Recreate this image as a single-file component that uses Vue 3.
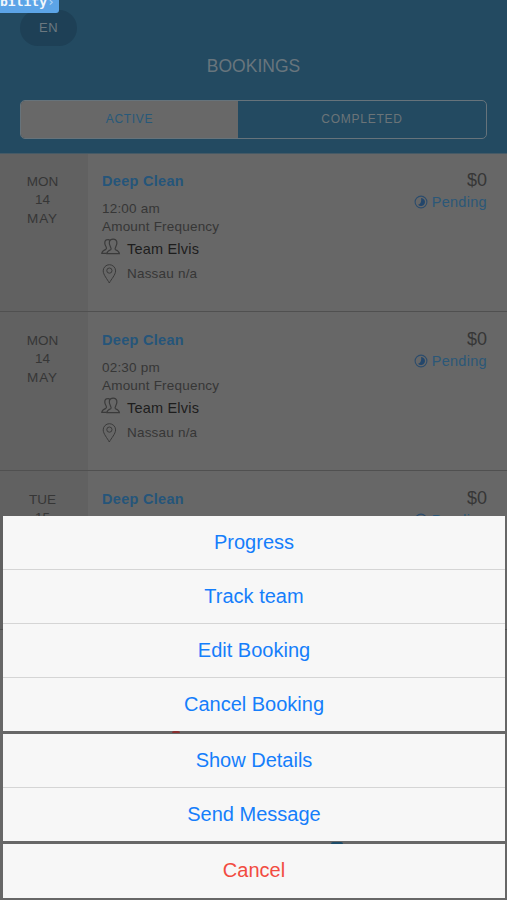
<script setup>
const bookings = [
  { weekday: 'MON', day: '14', month: 'MAY', time: '12:00 am' },
  { weekday: 'MON', day: '14', month: 'MAY', time: '02:30 pm' },
  { weekday: 'TUE', day: '15', month: 'MAY', time: '12:00 am' },
]
const groups = [
  ['Progress', 'Track team', 'Edit Booking', 'Cancel Booking'],
  ['Show Details', 'Send Message'],
]
</script>

<template>
  <div class="screen">
    <header class="header">
      <span class="debug">bility<i>›</i></span>
      <button class="lang">EN</button>
      <h1>BOOKINGS</h1>
      <nav class="tabs">
        <span class="tab active">ACTIVE</span>
        <span class="tab done">COMPLETED</span>
      </nav>
    </header>

    <main>
      <article v-for="(b, i) in bookings" :key="i" class="booking">
        <div class="date">
          <span>{{ b.weekday }}</span>
          <span>{{ b.day }}</span>
          <span class="month">{{ b.month }}</span>
        </div>
        <div class="details">
          <strong>Deep Clean</strong>
          <span class="time">{{ b.time }}</span>
          <span class="freq">Amount Frequency</span>
          <span class="team">
            <svg width="20" height="18" viewBox="0 0 20 18">
              <path d="M5.8 15.7H18.4C18.2 13.3 17.1 12.7 14.5 11.7C13.9 11.3 14.1 10.2 14.6 9.3C15.7 7.5 16.2 5.4 15.8 3.7C15.3 2 14 1.1 12.1 1.1C10.2 1.1 8.9 2 8.4 3.7C8 5.4 8.5 7.5 9.6 9.3C10.1 10.2 10.3 11.3 9.7 11.7C7.1 12.7 6 13.3 5.8 15.7Z" />
              <path d="M8.9 2.5C8.3 1.8 7.6 1.5 6.6 1.7C4.7 1.8 3.7 3.3 3.8 5.2C3.9 7 4.5 8.1 5.2 9C5.7 10 5.5 10.8 4.8 11.4C2.3 12.5 1 13.1.8 15.3H5.7" />
            </svg>
            Team Elvis
          </span>
          <span class="place">
            <svg width="20" height="22" viewBox="0 0 20 22">
              <path d="M7.3 20C5.4 16.3 1.2 11.7 1.2 7.9A6.2 6.2 0 0 1 13.6 7.9C13.6 11.7 9.2 16.3 7.3 20Z" />
              <circle cx="7.4" cy="7.6" r="2.6" />
            </svg>
            Nassau n/a
          </span>
        </div>
        <div class="summary">
          <span class="price">$0</span>
          <span class="status">
            <svg width="14" height="14" viewBox="0 0 14 14">
              <circle class="ring" cx="7" cy="7" r="5.9" />
              <path class="half" d="M7 3A4 4 0 1 1 4 9.7C6.4 9.2 7.8 6.4 7 3Z" />
            </svg>
            Pending
          </span>
        </div>
      </article>
    </main>

    <div class="sheet">
      <section v-for="(g, i) in groups" :key="i" class="group">
        <button v-for="a in g" :key="a">{{ a }}</button>
      </section>
      <section class="group cancel"><button>Cancel</button></section>
      <i class="peek red"></i>
      <i class="peek blue"></i>
    </div>
  </div>
</template>

<style>
body {
  background: #676767;
}
</style>

<style scoped>
* {
  box-sizing: border-box;
}
.screen {
  position: relative;
  height: 900px;
  overflow: hidden;
  background: #676767;
  font-family: 'Liberation Sans', Arial, sans-serif;
  color: #363636;
}
button {
  border: 0;
  padding: 0;
  font-family: inherit;
}
.header {
  position: relative;
  height: 154px;
  padding: 10px 20px 0;
  background: #234a61;
  border-bottom: 1px solid #455a66;
}
.debug {
  position: absolute;
  left: 0;
  top: 0;
  width: 59px;
  height: 13px;
  overflow: hidden;
  border-radius: 0 0 3px 0;
  background: #5ca4e7;
  color: #f2f7fc;
  font: bold 13px/4px 'DejaVu Sans Mono', monospace;
}
.debug i {
  font-style: normal;
  font-weight: normal;
  color: #b4d6f5;
}
.lang {
  display: block;
  width: 57px;
  height: 36px;
  border-radius: 18px;
  background: #1e4056;
  color: #6b7880;
  font-size: 13px;
  line-height: 34px;
  padding-bottom: 1px;
  letter-spacing: 0.5px;
  text-align: center;
}
h1 {
  margin: 10px 0 0;
  font-size: 17.5px;
  line-height: 20px;
  font-weight: normal;
  text-align: center;
  color: #68757d;
}
.tabs {
  display: flex;
  height: 39px;
  margin-top: 24px;
  overflow: hidden;
  border: 1px solid #66737b;
  border-radius: 5px;
  text-align: center;
  font-size: 12px;
  line-height: 36px;
}
.tab {
  flex: 1;
}
.tab.active {
  flex: 0 0 217px;
  background: #686868;
  color: #27597a;
  letter-spacing: 0.7px;
}
.tab.done {
  color: #6b7478;
  letter-spacing: 0.75px;
}
.booking {
  display: flex;
  height: 159px;
  border-bottom: 1px solid #505050;
}
.booking:first-child {
  height: 158px;
}
.booking:first-child .details {
  padding-top: 17px;
}
.booking:first-child .summary {
  padding-top: 15px;
}
.date {
  display: flex;
  flex-direction: column;
  width: 88px;
  padding: 19px 3px 0 0;
  background: #616161;
  font-size: 13.5px;
  line-height: 18.3px;
  text-align: center;
}
.booking + .booking .date {
  padding-top: 20px;
}
.month {
  letter-spacing: 0.9px;
}
.details {
  display: flex;
  flex: 1;
  flex-direction: column;
  padding: 18px 0 0 14px;
  font-size: 13.5px;
  line-height: 18px;
  letter-spacing: 0.2px;
}
.details strong {
  margin-bottom: 9px;
  font-size: 14.5px;
  line-height: 20px;
  letter-spacing: 0.3px;
  color: #25557a;
}
.team,
.place {
  display: flex;
  align-items: center;
  gap: 5px;
}
.team {
  height: 25px;
  font-size: 14.5px;
  color: #1d1d1d;
}
.team svg {
  position: relative;
  top: -2px;
  left: -1px;
}
.place {
  height: 25px;
}
.details svg {
  fill: none;
  stroke: #3a3a3a;
  stroke-width: 1.2;
}
.place svg {
  stroke-width: 1;
}
.summary {
  display: flex;
  flex-direction: column;
  align-items: flex-end;
  padding: 16px 20px 0 0;
}
.price {
  font-size: 18px;
  line-height: 22px;
}
.status {
  display: flex;
  align-items: center;
  gap: 4px;
  font-size: 14.5px;
  line-height: 22px;
  letter-spacing: 0.3px;
  color: #2b5778;
}
.ring {
  fill: none;
  stroke: #2b4c6d;
  stroke-width: 1.1;
}
.half {
  fill: #23466b;
}
.sheet {
  position: absolute;
  left: 0;
  right: 0;
  bottom: 0;
  display: flex;
  flex-direction: column;
  gap: 3px;
  padding: 0 2px 2px 3px;
}
.group {
  display: flex;
  flex-direction: column;
  background: #f7f7f7;
}
.group button {
  height: 54px;
  padding: 0;
  background: #f7f7f7;
  color: #157efb;
  font-size: 20px;
  line-height: 53px;
  text-align: center;
  border-bottom: 1px solid #d5d5d5;
}
.group button:last-child {
  height: 53px;
  border-bottom: 0;
}
.group.cancel button {
  height: 54px;
  padding-bottom: 1px;
  color: #f24b40;
}
.peek {
  position: absolute;
  height: 2px;
  border-radius: 4px 4px 0 0;
}
.red {
  left: 172px;
  bottom: 167px;
  width: 8px;
  background: #8a3030;
}
.blue {
  left: 331px;
  bottom: 56px;
  width: 12px;
  background: #1d4c69;
}
</style>
